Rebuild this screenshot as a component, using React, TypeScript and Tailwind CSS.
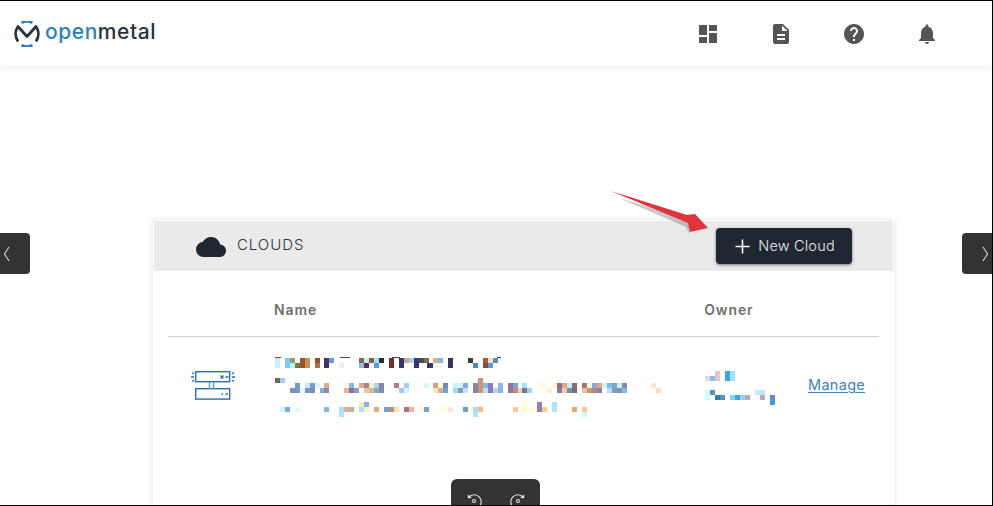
const HEAD = "M3 13h8V3H3v10zm0 8h8v-6H3v6zm10 0h8V11h-8v10zm0-18v6h8V3h-8z";
const DOC = "M14 2H6c-1.1 0-2 .9-2 2v16c0 1.1.9 2 2 2h12c1.1 0 2-.9 2-2V8l-6-6zm2 16H8v-2h8v2zm0-4H8v-2h8v2zm-3-5V3.5L18.5 9H13z";
const HELP = "M12 2C6.48 2 2 6.48 2 12s4.48 10 10 10 10-4.48 10-10S17.52 2 12 2zm1 17h-2v-2h2v2zm2.07-7.75l-.9.92C13.45 12.9 13 13.5 13 15h-2v-.5c0-1.1.45-2.1 1.17-2.83l1.24-1.26c.37-.36.59-.86.59-1.41 0-1.1-.9-2-2-2s-2 .9-2 2H8c0-2.21 1.79-4 4-4s4 1.79 4 4c0 .88-.36 1.68-.93 2.25z";
const BELL = "M12 22c1.1 0 2-.9 2-2h-4c0 1.1.89 2 2 2zm6-6v-5c0-3.07-1.64-5.64-4.5-6.32V4c0-.83-.67-1.5-1.5-1.5s-1.5.67-1.5 1.5v.68C7.63 5.36 6 7.92 6 11v5l-2 2v1h16v-1l-2-2z";
const CLOUD = "M19.35 10.04C18.67 6.59 15.64 4 12 4 9.11 4 6.6 5.64 5.35 8.04 2.34 8.36 0 10.91 0 14c0 3.31 2.69 6 6 6h13c2.76 0 5-2.24 5-5 0-2.64-2.05-4.78-4.65-4.96z";

function MI({ d }: { d: string }) {
  return (
    <svg width="24" height="24" viewBox="0 0 24 24" fill="#555555">
      <path d={d} />
    </svg>
  );
}

// [absolute page x, colour] per row, 5x5 mosaic cells that stand for the redacted text
type Row = [number, [number, string][]];
const z = (x3: number) => 170 + x3 / 3;
const y = (x3: number) => 430 + x3 / 3;
const mosaic: Row[] = [
  [357, [[z(315), "#c4f1fb"], [z(345), "#7ccbf5"], [z(360), "#9a9a6a"], [z(390), "#8f5b30"], [z(405), "#d18f55"], [z(435), "#8f4f30"], [z(462), "#5c3050"], [z(477), "#5a9de0"], [z(567), "#7d6a5a"], [z(582), "#c5eef5"], [z(597), "#7a6050"], [z(612), "#b0dcf5"], [z(627), "#2a2a2a"], [z(657), "#6e3030"], [z(687), "#35386a"], [z(702), "#d0a890"], [z(717), "#b0d0f0"], [z(732), "#3a3a70"], [z(747), "#3f5060"], [z(762), "#806858"],
    [y(9), "#d8b090"], [y(24), "#90b4e0"], [y(54), "#3f3060"], [y(114), "#3a3a30"], [y(159), "#a0602f"], [y(174), "#e8e0c8"], [y(189), "#6888a8"]]],
  [362, [[z(315), "#c4f1fb"], [z(345), "#7ccbf5"], [z(360), "#b5f5fa"], [z(375), "#88703c"], [z(390), "#8f5b30"], [z(405), "#d18f55"], [z(435), "#b07040"], [z(462), "#3a3070"], [z(507), "#f5ece5"], [z(567), "#88bfe8"], [z(582), "#5c3050"], [z(612), "#5098e0"], [z(657), "#6e3030"], [z(687), "#35386a"], [z(732), "#3a3070"], [z(772), "#35386a"],
    [y(-6), "#35386a"], [y(9), "#eefaff"], [y(24), "#fffbe0"], [y(54), "#3f3060"], [y(129), "#4a88cc"], [y(159), "#8a5030"], [y(174), "#5a98e0"]]],
  [377, [[z(315), "#666666"], [z(330), "#a5cdf5"], [y(144), "#c09878"]]],
  [382, [[z(375), "#7898c8"], [z(405), "#bff0fa"], [z(420), "#8098c8"], [z(435), "#e0f5fa"], [z(462), "#e0a888"], [z(522), "#fff8d8"], [z(537), "#88b8e8"], [z(567), "#d8b090"], [z(582), "#b08090"], [z(597), "#fff0c8"], [z(612), "#b0d0e8"], [z(627), "#8a80b0"], [z(672), "#b08090"], [z(702), "#a0d0f5"], [z(762), "#d0faff"],
    [y(9), "#d8a080"], [y(24), "#fff8e0"], [y(39), "#7088b8"], [y(69), "#c8f2fb"], [y(84), "#d0f5fb"], [y(99), "#80a8d8"], [y(129), "#8888b0"], [y(144), "#d09870"], [y(159), "#88b8e8"], [y(174), "#8880b8"], [y(204), "#88b8e8"], [y(234), "#907098"], [y(249), "#80a0d0"], [y(276), "#a8dcfa"], [y(321), "#fffbe0"], [y(336), "#fffbe0"], [y(366), "#fff4d0"], [y(381), "#907080"], [y(396), "#e0a888"], [y(411), "#c0f0f8"], [y(426), "#906878"], [y(456), "#a87878"], [y(471), "#fff8d8"], [y(486), "#88a8d8"], [y(501), "#e0a888"], [y(516), "#d0f5fb"], [y(531), "#88b8e8"], [y(546), "#80a0d8"], [y(561), "#c8f2fb"], [y(576), "#8888b8"], [y(663), "#ffe8c8"]]],
  [387, [[z(360), "#7890c0"], [z(375), "#7898c8"], [z(390), "#e8faff"], [z(405), "#7898c8"], [z(420), "#7090c8"], [z(450), "#88a8d8"], [z(462), "#9088b0"], [z(522), "#e0b898"], [z(537), "#90708a"], [z(552), "#88a0d0"], [z(582), "#e8c8a8"], [z(597), "#d8b898"], [z(612), "#88a8c8"], [z(627), "#7090b8"], [z(687), "#a8c4e0"], [z(702), "#d0f5fb"],
    [y(9), "#ffe4c0"], [y(24), "#d8b090"], [y(39), "#70a0d0"], [y(69), "#a8d8f5"], [y(84), "#80a0b8"], [y(99), "#c0e8fa"], [y(129), "#9080a0"], [y(144), "#d09870"], [y(159), "#b8e4f8"], [y(174), "#8880b8"], [y(189), "#b8d0ec"], [y(204), "#88b8e8"], [y(234), "#8878a8"], [y(249), "#b89080"], [y(264), "#f0d0b0"], [y(276), "#707898"], [y(291), "#a8cff2"], [y(351), "#fcecd8"], [y(381), "#8878a8"], [y(396), "#ffc8a0"], [y(411), "#7090a8"], [y(426), "#707078"], [y(456), "#f0c098"], [y(471), "#c09880"], [y(486), "#b08880"], [y(501), "#9080a8"], [y(531), "#b0e0fa"], [y(546), "#8898c0"], [y(561), "#7898b0"], [y(576), "#88b8e8"], [y(678), "#f4dcc8"]]],
  [401, [[z(567), "#fbe8c0"], [z(582), "#88b0e0"], [y(276), "#fffdd0"], [y(321), "#8f80b0"], [y(366), "#b0e4fc"]]],
  [406, [[z(330), "#d0f8ff"], [z(345), "#80a8e0"], [z(375), "#e0faff"], [z(462), "#88b8e8"], [z(507), "#a8dcfa"], [z(522), "#e8b088"], [z(537), "#b8b0a8"], [z(567), "#b0e4fc"], [z(582), "#fff0c8"], [z(612), "#e0a880"], [z(642), "#70a0d8"], [z(657), "#b89088"], [z(672), "#ffe0b0"], [z(702), "#a07890"], [z(717), "#f0b890"], [z(747), "#fff4e0"], [z(762), "#78a0d8"],
    [y(24), "#fffde0"], [y(39), "#fffde0"], [y(54), "#fce8e0"], [y(99), "#7898c8"], [y(114), "#fffde0"], [y(129), "#b0dcfa"], [y(144), "#f8b888"], [y(249), "#ffc898"], [y(276), "#fffdd0"], [y(291), "#fffde0"], [y(306), "#fffde0"], [y(321), "#8f80b0"], [y(336), "#ffcc98"], [y(366), "#b0e4fc"], [y(426), "#dca878"], [y(456), "#ffc898"]]],
  [411, [[z(507), "#b0e4fc"], [z(572), "#fffdf0"], [y(129), "#b0e4fc"], [y(456), "#d0f8fc"]]],
  [375, [[705, "#ead8dc"], [710, "#80c4ea"], [715, "#e4c4c8"], [725, "#48a0e0"], [730, "#98e8ff"]]],
  [370, [[715, "#e4c4c8"], [725, "#48a0e0"], [730, "#98e8ff"]]],
  [389, [[705, "#d0fbff"], [710, "#6890b0"], [755, "#c8e8f5"], [760, "#b8e8fc"]]],
  [394, [[705, "#d0fbff"], [715, "#3080b8"], [720, "#5890b8"], [730, "#80d4f8"], [735, "#48a0e0"], [740, "#90d8f0"], [745, "#b8a8c0"], [755, "#fdfbf5"], [760, "#b8a8b8"], [770, "#6888c8"]]],
  [399, [[770, "#4898d8"]]],
];

function Mosaic() {
  const cells = mosaic.flatMap(([ry, row]) => row.map(([x, c]) => ({ x, ry, c })));
  return (
    <svg className="absolute left-0 top-0 pointer-events-none" width="993" height="506" shapeRendering="crispEdges">
      {cells.map((k, i) => (
        <rect key={i} x={k.x} y={k.ry} width="5" height="5" fill={k.c} />
      ))}
      <rect x="275" y="356" width="6" height="1" fill="#5a4a40" />
      <rect x="392" y="356" width="8" height="1" fill="#5a4a40" />
      <rect x="340" y="356" width="10" height="1" fill="#5a4a40" />
      <rect x="497" y="356" width="4" height="1" fill="#404040" />
    </svg>
  );
}

function ServerIcon() {
  return (
    <svg width="46" height="32" viewBox="0 0 46 32" fill="none" stroke="#2c6fad" strokeWidth="1.4">
      <rect x="5.700" y="1.700" width="34" height="10" />
      <rect x="5.700" y="18.700" width="34" height="10.400" />
      <path d="M19.500 12v6.500M23.500 12v6.500" strokeWidth="1.600" stroke="#6fa0cc" />
      <path d="M1 7h3M42 7h3M2 2.500l2 1.500M44 2.500l-2 1.500M2 11.500l2-1.500M44 11.500l-2-1.500" />
      <path d="M30.500 5.500l3 3M33.500 5.500l-3 3M35.500 7h3M31.500 24h1.500M35.500 24h2.500" />
    </svg>
  );
}

export default function App() {
  return (
    <div className="relative w-[993px] h-[506px] overflow-hidden bg-white flex flex-col border-t border-r border-b border-black font-['Inter','Liberation_Sans',sans-serif]">
      <header className="h-[65px] shrink-0 flex items-center bg-white shadow-[0_2px_8px_rgba(0,0,0,0.08)]">
        <div className="flex items-center ml-[14px] gap-[5px]">
          <svg width="26" height="26" viewBox="0 0 26 26" fill="none">
            <path d="M7.500 1.700a13 13 0 0 1 11 0" stroke="#2f80b8" strokeWidth="2.600" />
            <path d="M7.500 24.300a13 13 0 0 0 11 0" stroke="#2f80b8" strokeWidth="2.600" />
            <path d="M4 20.500C1 16 .8 10 4 5.500L13 15.500L22 5.500C25.200 10 25 16 22 20.500" stroke="#28323e" strokeWidth="2.800" strokeLinejoin="round" />
          </svg>
          <div className="text-[21px] leading-none font-medium tracking-[0.55px] -mt-[4px]">
            <span className="text-[#2f80b8]">open</span>
            <span className="text-[#28323e]">metal</span>
          </div>
        </div>
        <nav className="ml-auto mr-[53px] flex items-center gap-[49px]">
          <MI d={HEAD} />
          <MI d={DOC} />
          <MI d={HELP} />
          <MI d={BELL} />
        </nav>
      </header>

      <main className="flex-1 pt-[154px] pl-[153px]">
        <section className="w-[741px] h-[400px] p-px bg-white shadow-[0_0_6px_rgba(0,0,0,0.13)]">
          <div className="h-[50px] bg-[#eaeaea] flex items-center pl-[42px] pr-[41px]">
            <svg width="30" height="30" viewBox="0 0 24 24" fill="#1f2733" className="mt-[2px]">
              <path d={CLOUD} />
            </svg>
            <span className="ml-[11px] -mt-[1px] text-[15px] font-light text-[#2a3340] tracking-[0.95px]">CLOUDS</span>
            <button className="ml-auto w-[136px] h-[36px] rounded bg-[#1f2733] text-white/90 flex items-center justify-center gap-[8px] text-[14.500px] font-light tracking-[0.2px] pl-[2px] shadow-[0_1px_3px_rgba(0,0,0,0.5)]">
              <svg width="15" height="15" viewBox="0 0 15 15" stroke="#fff" strokeWidth="1.600">
                <path d="M7.500 0.500v14M0.500 7.500h14" />
              </svg>
              New Cloud
            </button>
          </div>
          <div className="mx-[14px]">
            <div className="h-[66px] border-b border-[#cfcfcf] flex items-center pt-[12px] text-[14px] font-semibold tracking-[0.9px] text-[#6f6f6f]">
              <span className="ml-[106px]">Name</span>
              <span className="ml-[387px]">Owner</span>
            </div>
            <div className="flex items-center h-[96px]">
              <div className="ml-[22px] w-[46px] pt-[1px]"><ServerIcon /></div>
              <a className="ml-[572px] text-[14.500px] tracking-[0.3px] text-[#3f85b5] underline underline-offset-2">Manage</a>
            </div>
          </div>
        </section>
      </main>

      <Mosaic />

      <svg className="absolute left-0 top-0 pointer-events-none" width="993" height="506">
        <polygon points="620,195 686,215 692,222 690,231 687,224" fill="#5a4a4a" opacity="0.3" transform="translate(-1,2)" />
        <polygon points="611,190 687,214 695,213 708,227 690,231 688,222" fill="#e0343c" />
      </svg>

      <div className="absolute left-0 top-[232px] w-[30px] h-[41px] bg-[#333333] rounded-r flex items-center justify-center pr-[16px]">
        <svg width="8" height="16" viewBox="0 0 8 16" fill="none" stroke="#d8d8d8" strokeWidth="1.100"><path d="M6 1L1.500 8L6 15" /></svg>
      </div>
      <div className="absolute right-0 top-[232px] w-[30px] h-[41px] bg-[#333333] rounded-l flex items-center justify-center pl-[16px]">
        <svg width="8" height="16" viewBox="0 0 8 16" fill="none" stroke="#d8d8d8" strokeWidth="1.100"><path d="M2 1L6.500 8L2 15" /></svg>
      </div>

      <div className="absolute left-[451px] bottom-0 w-[89px] h-[26px] bg-[#333333] rounded-t-md flex justify-center gap-[26px] pt-[13px]">
        <svg width="18" height="18" viewBox="0 0 18 18" fill="none" stroke="#e0e0e0" strokeWidth="1.100">
          <path d="M4 5a7 7 0 1 1-1 8" />
          <path d="M2.500 2.500L3 6.500L7 5.500" fill="#e0e0e0" stroke="none" />
          <circle cx="9" cy="9" r="1.500" />
        </svg>
        <svg width="18" height="18" viewBox="0 0 18 18" fill="none" stroke="#e0e0e0" strokeWidth="1.100">
          <path d="M14 5a7 7 0 1 0 1 8" />
          <path d="M15.500 2.500L15 6.500L11 5.500" fill="#e0e0e0" stroke="none" />
          <circle cx="9" cy="9" r="1.500" />
        </svg>
      </div>
    </div>
  );
}
